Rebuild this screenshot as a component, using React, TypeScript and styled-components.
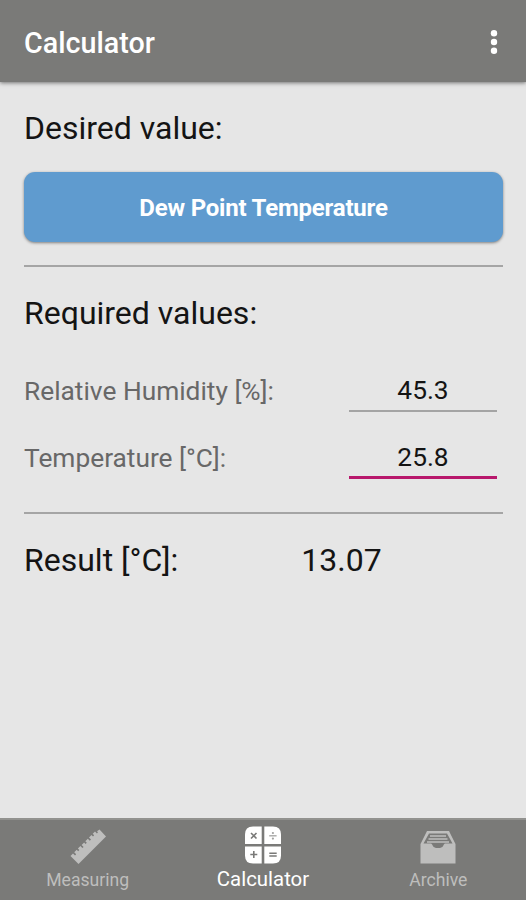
import React, { useState } from "react";
import styled, { createGlobalStyle } from "styled-components";

const GlobalStyle = createGlobalStyle`
  * { box-sizing: border-box; }
  body { margin: 0; background: #e6e6e6; font-family: Roboto, sans-serif; }
`;

const Screen = styled.div`
  display: flex;
  flex-direction: column;
  width: 526px;
  height: 900px;
  overflow: hidden;
  background: #e6e6e6;
  color: #141414;
`;

const AppBar = styled.header`
  display: flex;
  flex: none;
  align-items: center;
  justify-content: space-between;
  height: 82px;
  padding: 3px 23px 0 24px;
  background: #7a7a78;
  box-shadow: 0 1px 4px rgba(0, 0, 0, 0.5);
`;

const Title = styled.h1`
  margin: 0;
  font-size: 28.7px;
  line-height: 34px;
  font-weight: 500;
  color: #fff;
`;

const MenuButton = styled.button`
  display: flex;
  width: 18px;
  height: 30px;
  padding: 0;
  border: 0;
  background: none;
`;

const Content = styled.main`
  display: flex;
  flex: 1;
  flex-direction: column;
  padding: 26px 23px 0 24px;
`;

const Heading = styled.h2`
  margin: 0;
  font-size: 32px;
  line-height: 40px;
  font-weight: 400;
`;

const ValueButton = styled.button`
  flex: none;
  height: 70px;
  margin: 23.5px 0 23.5px;
  padding: 2px 0 0;
  border: 0;
  border-radius: 11px;
  background: #5f9bcf;
  box-shadow: 0 1px 3px rgba(0, 0, 0, 0.45);
  color: #fff;
  font: 700 24px/30px Roboto, sans-serif;
  letter-spacing: -0.2px;
`;

const Divider = styled.hr`
  flex: none;
  width: 100%;
  height: 2px;
  margin: 0;
  border: 0;
  background: #a5a5a5;
`;

const Section = styled.section`
  padding: 26px 0 33px;
`;

const Fields = styled.div`
  display: grid;
  gap: 18px;
  padding: 30px 6px 0 0;
`;

const Field = styled.label`
  display: flex;
  justify-content: space-between;
  height: 49px;
`;

const FieldLabel = styled.span`
  padding-top: 12px;
  font-size: 26.3px;
  line-height: 32px;
  color: #686868;
`;

const FieldInput = styled.input<{ $active?: boolean }>`
  width: 148px;
  height: 49px;
  padding: ${(p) => (p.$active ? "7px" : "6px")} 0 0;
  border: 0;
  border-bottom: ${(p) => (p.$active ? "3px solid #b8186c" : "2px solid #a4a4a4")};
  border-radius: 0;
  outline: 0;
  background: none;
  color: #141414;
  font: 400 26.3px/32px Roboto, sans-serif;
  text-align: center;
`;

const Result = styled.section`
  display: grid;
  grid-template-columns: 199px 1fr;
  padding-top: 26px;
  font-size: 32px;
  line-height: 40px;
`;

const ResultValue = styled.output`
  width: 237px;
  text-align: center;
`;

const TabBar = styled.nav`
  display: grid;
  flex: none;
  grid-template-columns: repeat(3, 1fr);
  height: 82px;
  border-top: 2px solid #92928f;
  background: #7a7a78;
`;

const Tab = styled.button<{ $active?: boolean }>`
  display: flex;
  flex-direction: column;
  align-items: center;
  padding: 5px 0 0;
  border: 0;
  background: none;
  color: ${(p) => (p.$active ? "#fff" : "#bebebd")};
  font: 400 ${(p) => (p.$active ? "20.4px" : "17.6px")}/24px Roboto, sans-serif;

  svg { flex: none; margin-bottom: ${(p) => (p.$active ? "2px" : "3px")}; }
`;

const MoreIcon = () => (
  <svg width="18" height="30" viewBox="0 0 18 30" fill="#fff">
    <circle cx="9" cy="5.3" r="3.2" />
    <circle cx="9" cy="14" r="3.2" />
    <circle cx="9" cy="22.7" r="3.2" />
  </svg>
);

const RulerIcon = () => (
  <svg width="40" height="40" viewBox="0 0 40 40">
    <path
      d="M31.5 4.5 38 11.5 10.5 39 2.5 31 5 28.5 7 30.5 8.2 29.3 6.2 27.3 8.7 24.8 10.2 26.3 11.4 25.1 9.9 23.6 12.4 21.1 14.4 23.1 15.6 21.9 13.6 19.9 16.1 17.4 17.6 18.9 18.8 17.7 17.3 16.2 19.8 13.7 21.8 15.7 23 14.5 21 12.5 23.5 10 25 11.5 26.2 10.3 24.7 8.8 27 6.5 28.9 8.4 30 7.3 29 6.3Z"
      fill="currentColor"
    />
  </svg>
);

const CalculatorIcon = () => (
  <svg width="40" height="40" viewBox="0 0 40 40">
    <g fill="currentColor">
      <path d="M10 1.5H18.7V19H2V9.5Q2 1.5 10 1.5Z" />
      <path d="M21.3 1.5H30Q38 1.5 38 9.5V19H21.3Z" />
      <path d="M2 21.5H18.7V38.5H10Q2 38.5 2 30.5Z" />
      <path d="M21.3 21.5H38V30.5Q38 38.5 30 38.5H21.3Z" />
    </g>
    <g stroke="#7a7a78" strokeWidth="1.6" fill="none">
      <path d="m8 8 5.5 5.5m0-5.5L8 13.5M7.3 29.5h7M10.8 26v7M26.3 28.2h7.4M26.3 31h7.4" />
      <path d="M26.2 10.8h7.4" strokeWidth="1.3" opacity=".7" />
    </g>
    <g fill="#7a7a78" opacity=".7">
      <circle cx="29.9" cy="8" r="1.1" />
      <circle cx="29.9" cy="13.6" r="1.1" />
    </g>
  </svg>
);

const ArchiveIcon = () => (
  <svg width="40" height="40" viewBox="0 0 40 40">
    <path
      fill="currentColor"
      fillRule="evenodd"
      d="M9 6H31L37.5 19V38.5H2.5V19ZM11 8.6 5.5 18.5H12.5C13.5 18.5 14 19.2 14.5 20.2Q15.5 23 18 23H22Q24.5 23 25.5 20.2C26 19.2 26.5 18.5 27.5 18.5H34.5L29 8.6Z"
    />
    <path d="M12 11h16M10.5 14h19M9 17h22" stroke="currentColor" strokeWidth="1.7" />
  </svg>
);

const tabs = [
  { name: "Measuring", Icon: RulerIcon },
  { name: "Calculator", Icon: CalculatorIcon },
  { name: "Archive", Icon: ArchiveIcon },
];

export default function App() {
  const [humidity, setHumidity] = useState("45.3");
  const [temperature, setTemperature] = useState("25.8");
  const [active, setActive] = useState("Calculator");

  return (
    <Screen>
      <GlobalStyle />
      <AppBar>
        <Title>Calculator</Title>
        <MenuButton aria-label="More options">
          <MoreIcon />
        </MenuButton>
      </AppBar>
      <Content>
        <Heading>Desired value:</Heading>
        <ValueButton>Dew Point Temperature</ValueButton>
        <Divider />
        <Section>
          <Heading>Required values:</Heading>
          <Fields>
            <Field>
              <FieldLabel>Relative Humidity [%]:</FieldLabel>
              <FieldInput value={humidity} onChange={(e) => setHumidity(e.target.value)} />
            </Field>
            <Field>
              <FieldLabel>Temperature [°C]:</FieldLabel>
              <FieldInput $active value={temperature} onChange={(e) => setTemperature(e.target.value)} />
            </Field>
          </Fields>
        </Section>
        <Divider />
        <Result>
          <span>Result [°C]:</span>
          <ResultValue>13.07</ResultValue>
        </Result>
      </Content>
      <TabBar>
        {tabs.map(({ name, Icon }) => (
          <Tab key={name} $active={name === active} onClick={() => setActive(name)}>
            <Icon />
            {name}
          </Tab>
        ))}
      </TabBar>
    </Screen>
  );
}
